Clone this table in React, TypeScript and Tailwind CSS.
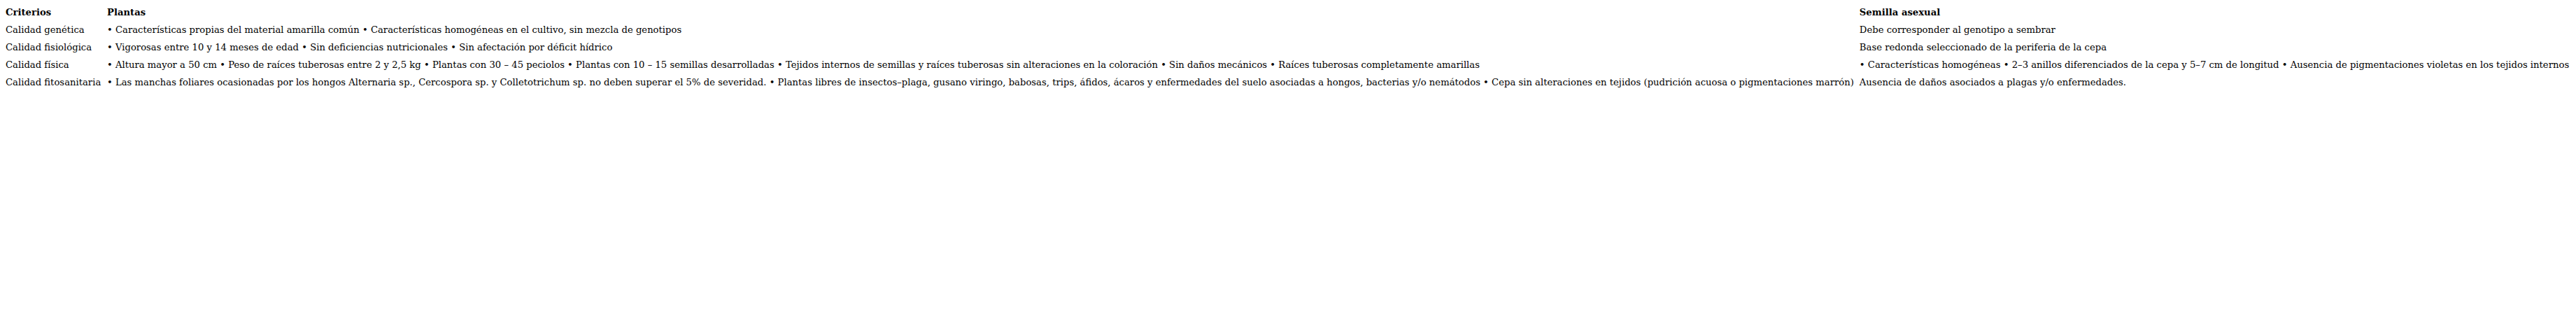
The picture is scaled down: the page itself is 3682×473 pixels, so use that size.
const rows = [
  {
    criterio: "Calidad genética",
    plantas: "• Características propias del material amarilla común • Características homogéneas en el cultivo, sin mezcla de genotipos",
    semilla: "Debe corresponder al genotipo a sembrar",
  },
  {
    criterio: "Calidad fisiológica",
    plantas: "• Vigorosas entre 10 y 14 meses de edad • Sin deficiencias nutricionales • Sin afectación por déficit hídrico",
    semilla: "Base redonda seleccionado de la periferia de la cepa",
  },
  {
    criterio: "Calidad física",
    plantas:
      "• Altura mayor a 50 cm • Peso de raíces tuberosas entre 2 y 2,5 kg • Plantas con 30 – 45 peciolos • Plantas con 10 – 15 semillas desarrolladas • Tejidos internos de semillas y raíces tuberosas sin alteraciones en la coloración • Sin daños mecánicos • Raíces tuberosas completamente amarillas",
    semilla:
      "• Características homogéneas • 2–3 anillos diferenciados de la cepa y 5–7 cm de longitud • Ausencia de pigmentaciones violetas en los tejidos internos",
  },
  {
    criterio: "Calidad fitosanitaria",
    plantas:
      "• Las manchas foliares ocasionadas por los hongos Alternaria sp., Cercospora sp. y Colletotrichum sp. no deben superar el 5% de severidad. • Plantas libres de insectos–plaga, gusano viringo, babosas, trips, áfidos, ácaros y enfermedades del suelo asociadas a hongos, bacterias y/o nemátodos • Cepa sin alteraciones en tejidos (pudrición acuosa o pigmentaciones marrón)",
    semilla: "Ausencia de daños asociados a plagas y/o enfermedades.",
  },
];

export default function App() {
  return (
    <div className="min-h-[473px] w-[3682px] bg-white font-['DejaVu_Serif',serif] text-[13.2px] text-black">
      <table className="ml-[4px] mt-[5px] table-fixed whitespace-nowrap">
        <thead>
          <tr>
            <th className="w-[145px] px-[4px] py-[4px] text-left leading-[17px] font-bold">Criterios</th>
            <th className="w-[2504px] px-[4px] py-[4px] text-left leading-[17px] font-bold">Plantas</th>
            <th className="w-[1025px] px-[4px] py-[4px] text-left leading-[17px] font-bold">Semilla asexual</th>
          </tr>
        </thead>
        <tbody>
          {rows.map((r) => (
            <tr key={r.criterio}>
              <td className="px-[4px] py-[4px] leading-[17px]">{r.criterio}</td>
              <td className="px-[4px] py-[4px] leading-[17px]">{r.plantas}</td>
              <td className="px-[4px] py-[4px] leading-[17px]">{r.semilla}</td>
            </tr>
          ))}
        </tbody>
      </table>
    </div>
  );
}
